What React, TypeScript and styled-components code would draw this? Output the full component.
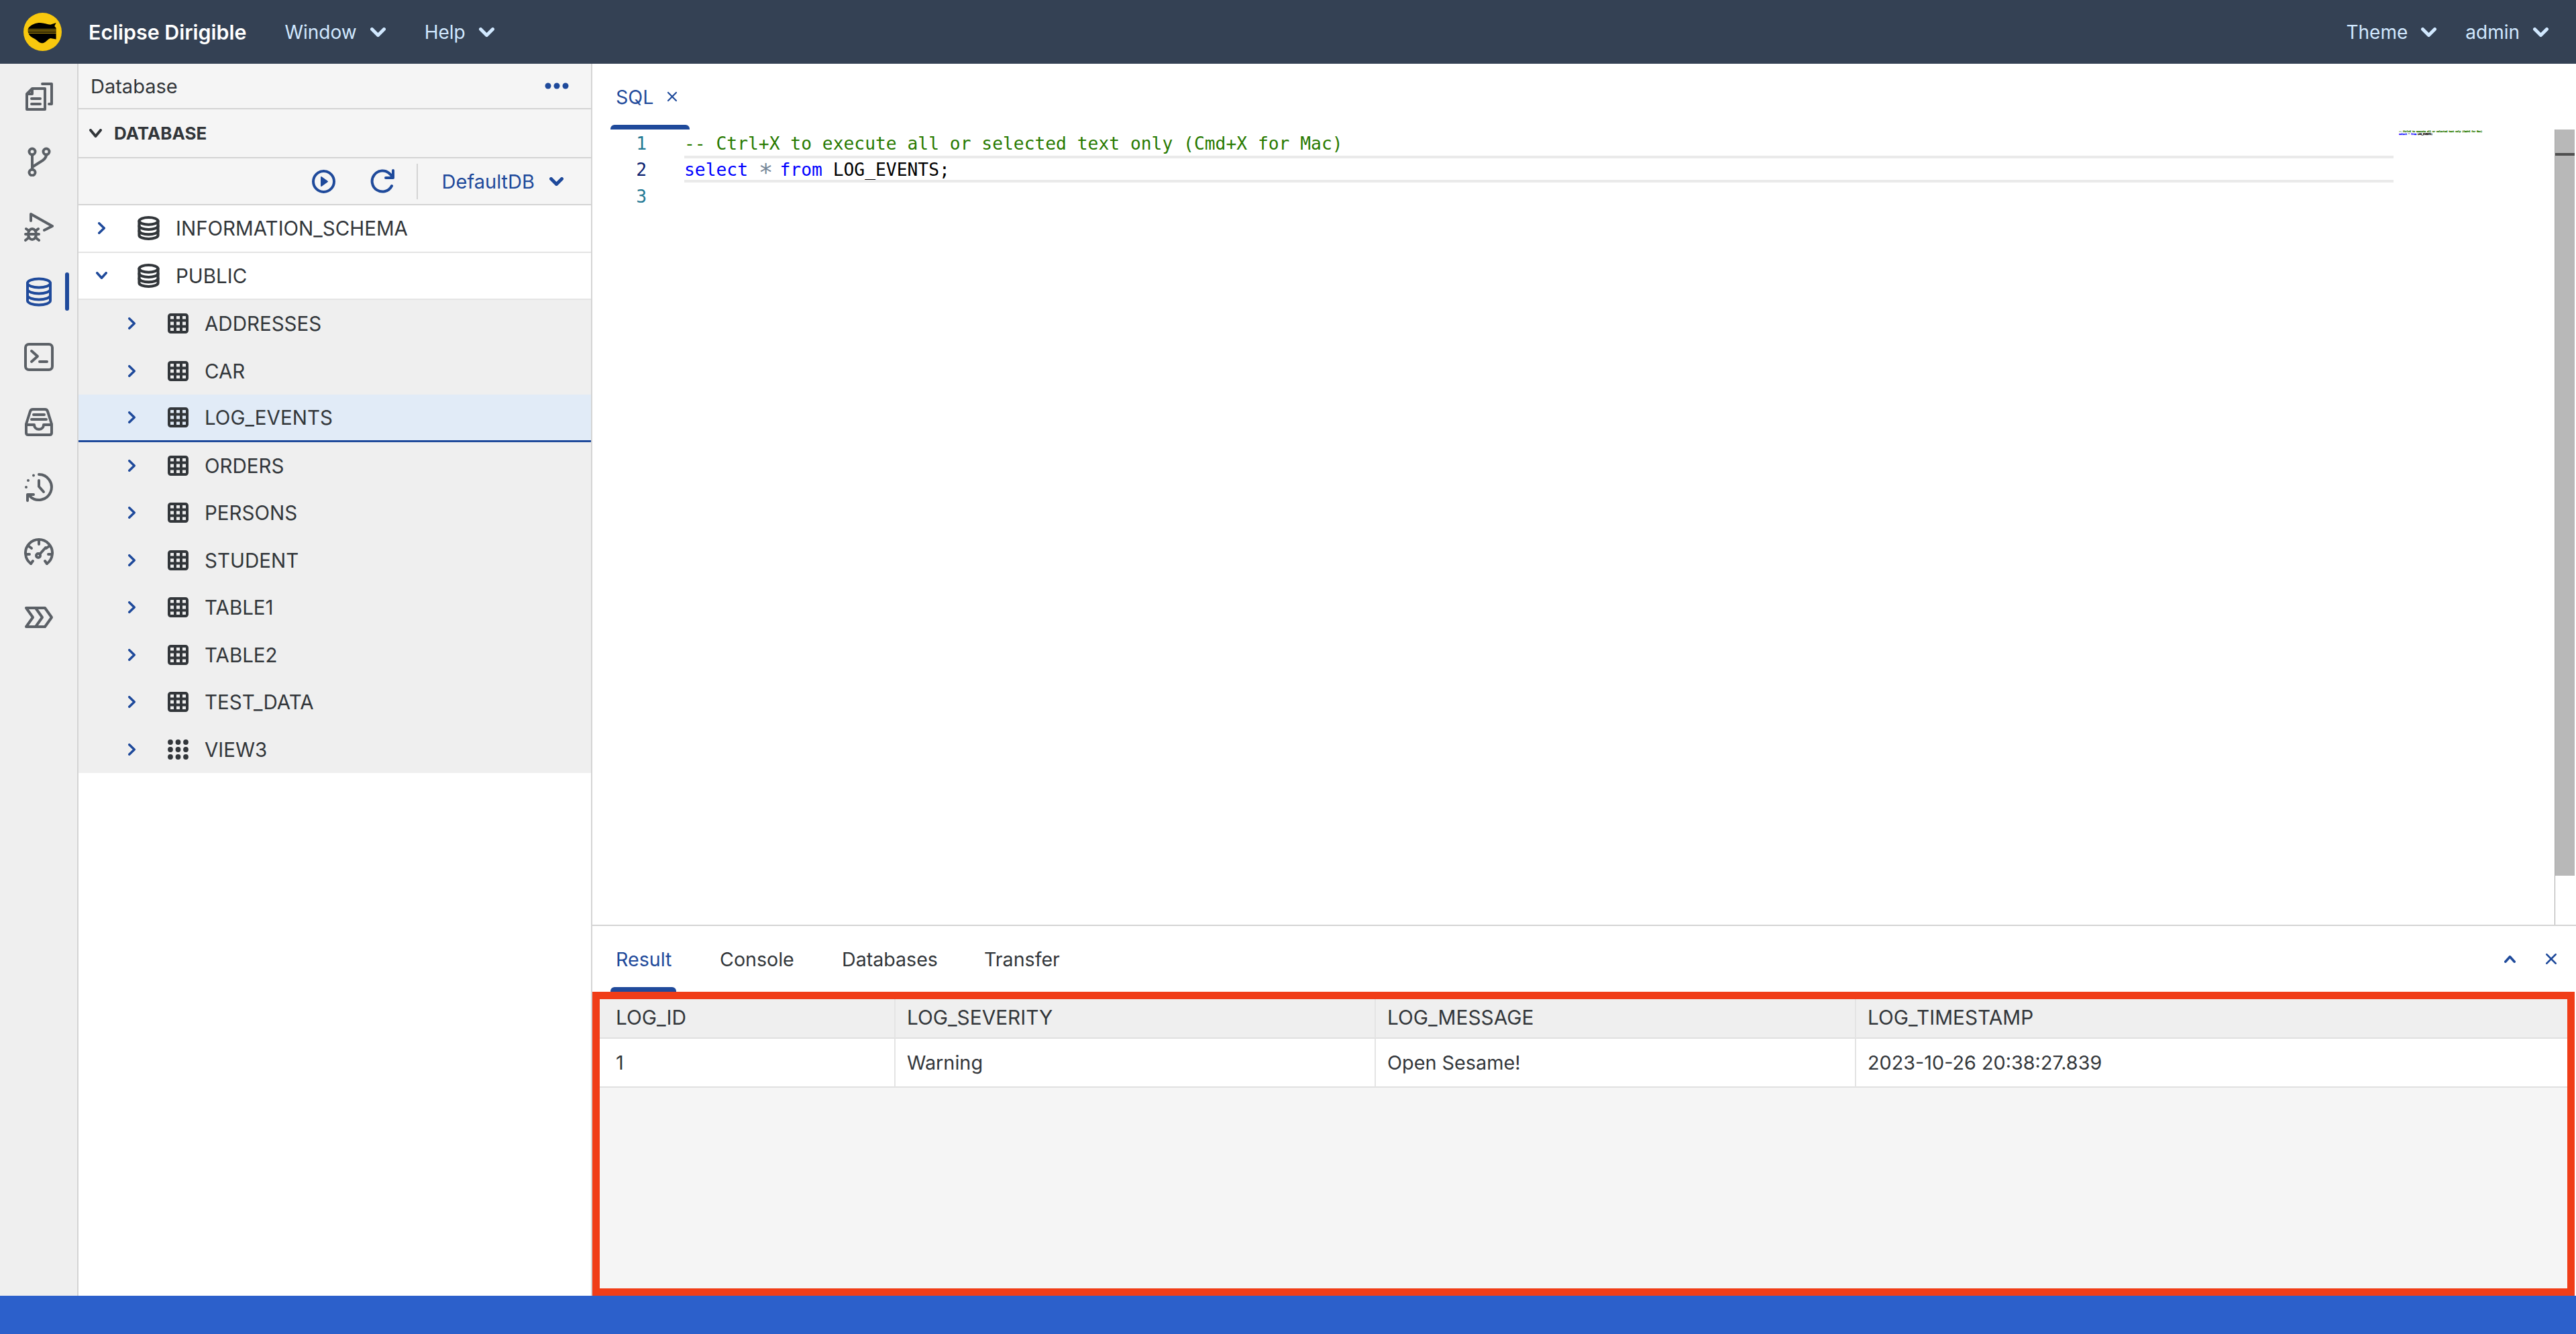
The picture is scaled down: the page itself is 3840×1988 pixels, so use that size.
import React from "react";
import styled, { createGlobalStyle } from "styled-components";

const Global = createGlobalStyle`
  html, body { margin: 0; padding: 0; background: #fff; }
  body { font-family: Inter, "Open Sans", "Liberation Sans", sans-serif; color: #32363a; }
  * { box-sizing: border-box; }
`;

const Page = styled.div`
  width: 3840px; height: 1988px; display: flex; flex-direction: column; overflow: hidden;
`;
const Shell = styled.header`
  height: 95px; flex: none; background: #344154; display: flex; align-items: center; padding: 0 41px 0 35px; color: #d1e8ff;
`;
const Brand = styled.span`
  margin-left: 40px; margin-right: 57px; color: #fff; font-size: 30.4px; font-weight: 600;
`;
const MenuItem = styled.span<{ $after?: number }>`
  display: flex; align-items: center; gap: 20px; font-size: 28px; margin-right: ${(p) => p.$after ?? 58}px;
  &:last-child { margin-right: 0; }
`;
const ShellSpacer = styled.div` flex: 1; `;
const Body = styled.div` flex: 1; display: flex; min-height: 0; `;
const Rail = styled.nav`
  width: 117px; flex: none; background: #efefef; border-right: 2px solid #d4d4d4;
`;
const RailItem = styled.div<{ $active?: boolean }>`
  height: 97px; width: 115px; display: flex; align-items: center; justify-content: center; position: relative;
  color: ${(p) => (p.$active ? "#1f4a9b" : "#5b6066")};
  ${(p) => p.$active && `&::after { content: ""; position: absolute; right: 12px; top: 20px; width: 6px; height: 57px; border-radius: 3px; background: #1f4a9b; }`}
`;
const Side = styled.aside`
  width: 766px; flex: none; border-right: 2px solid #d4d4d4; background: #fff; display: flex; flex-direction: column;
`;
const PanelTitle = styled.div`
  height: 68px; background: #f5f5f5; border-bottom: 2px solid #d4d4d4; display: flex; align-items: center; justify-content: space-between;
  padding: 0 33px 0 18px; font-size: 29px; color: #32363a;
`;
const SectionHead = styled.div`
  height: 73px; background: #f5f5f5; border-bottom: 2px solid #d4d4d4; display: flex; align-items: center; gap: 18px;
  padding-left: 16px; font-size: 26px; font-weight: 700; color: #32363a;
`;
const Toolbar = styled.div`
  height: 70px; background: #f5f5f5; border-bottom: 2px solid #d4d4d4; display: flex; align-items: center; justify-content: flex-end;
  padding-right: 41px; color: #1f4a9b; font-size: 29px;
`;
const ToolButton = styled.span` display: flex; margin-right: 52px; &:nth-child(2) { margin-right: 33px; } `;
const ToolSep = styled.span` width: 2px; height: 53px; background: #d4d4d4; margin-right: 36px; `;
const Select = styled.span` display: flex; align-items: center; gap: 22px; `;
const Tree = styled.div` display: flex; flex-direction: column; `;
const Row = styled.div<{ $child?: boolean; $selected?: boolean }>`
  height: 70.5px; display: flex; align-items: center; font-size: 29.5px; color: #32363a;
  padding-left: ${(p) => (p.$child ? "70px" : "25px")};
  background: ${(p) => (p.$selected ? "#e1ebf7" : p.$child ? "#efefef" : "#fff")};
  border-bottom: ${(p) => (p.$selected ? "3px solid #1f4a9b" : p.$child ? "none" : "2px solid #e4e4e4")};
`;
const Twist = styled.span`
  width: 18px; display: flex; justify-content: center; color: #1f4a9b; margin-right: 45px;
`;
const NodeIcon = styled.span<{ $child?: boolean }>`
  display: flex; width: ${(p) => (p.$child ? "31px" : "33px")}; margin-right: 24px; color: #32363a;
`;
const Main = styled.main` flex: 1; min-width: 0; display: flex; flex-direction: column; `;
const EditorTabs = styled.div` height: 98px; flex: none; display: flex; padding-left: 27px; `;
const TabItem = styled.div<{ $active?: boolean; $w: number; $offset?: number }>`
  position: relative; width: ${(p) => p.$w}px; height: 100%; display: flex; align-items: center; padding-left: 8px; gap: 20px;
  margin-left: ${(p) => p.$offset ?? 0}px;
  font-size: 28.6px; color: ${(p) => (p.$active ? "#1f4a9b" : "#32363a")};
  ${(p) => p.$active && `&::after { content: ""; position: absolute; left: 0; right: 0; bottom: 0; height: 7px; border-radius: 6px 6px 0 0; background: #1f4a9b; }`}
`;
const Editor = styled.section`
  height: 1185px; flex: none; display: flex; font-family: "DejaVu Sans Mono", monospace; font-size: 26.3px; line-height: 42px; white-space: pre;
`;
const Gutter = styled.div` width: 137px; flex: none; padding: 0 56px 0 0; text-align: right; color: #237893; `;
const GutterNum = styled.div<{ $current?: boolean }>` height: 39.3px; color: ${(p) => (p.$current ? "#0b216f" : "#237893")}; `;
const Code = styled.div` flex: 1; min-width: 0; `;
const Line = styled.div<{ $current?: boolean }>`
  height: 39.3px;
  ${(p) => p.$current && "border-top: 4px solid #eaeaea; border-bottom: 4px solid #eaeaea; line-height: 34px;"}
`;
const Comment = styled.span` color: #287a00; `;
const Keyword = styled.span` color: #0000ff; `;
const Star = styled.span`
  display: inline-block; width: 15.84px; text-align: center; color: #778899; font-size: 36px; line-height: 0; position: relative; top: 7px;
`;
const MiniStar = styled.span` color: #778899; `;
const Plain = styled.span` color: #000; `;
const Minimap = styled.div`
  width: 240px; flex: none; padding-left: 8px; font-size: 3.33px; line-height: 4px; padding-top: 1px; font-weight: 700;
  -webkit-text-stroke: 0.3px currentColor;
`;
const Scrollbar = styled.div` width: 30px; flex: none; border-left: 1px solid #a8a8a8; margin-right: 2px; `;
const ScrollThumb = styled.div`
  height: 1112px; background: #b8b8b8; border-top: 35px solid #b8b8b8; position: relative;
  &::after { content: ""; position: absolute; left: 0; right: 0; top: 0; height: 4px; background: #4f4f4f; }
`;
const BottomTabs = styled.div`
  height: 100px; flex: none; border-top: 2px solid #d4d4d4; display: flex; align-items: center; padding: 0 28px 0 27px;
`;
const BottomTabList = styled.div` display: flex; height: 100%; gap: 0; flex: 1; `;
const BottomActions = styled.div` display: flex; align-items: center; gap: 44px; color: #1f4a9b; `;
const ResultFrame = styled.section`
  flex: 1; min-height: 0; border: 11px solid #f03d18; margin-right: 2px; background: #f5f5f5;
`;
const Grid = styled.div` display: grid; grid-template-columns: 441px 716px 716px 1fr; `;
const HeadCell = styled.div<{ $first?: boolean }>`
  height: 59px; background: #efefef; border-bottom: 2px solid #e0e0e0; border-right: 2px solid #e4e4e4;
  padding: 0 0 3px ${(p) => (p.$first ? "24px" : "17px")}; display: flex; align-items: center; font-size: 29.8px;
  &:nth-child(4n) { border-right: none; }
`;
const Cell = styled(HeadCell)` height: 73px; padding-bottom: 0; background: #fff; font-size: 28.8px; `;

const Stroke = styled.svg`
  display: block; fill: none; stroke: currentColor; stroke-linecap: round; stroke-linejoin: round; flex: none;
`;

const Chevron = ({ dir, w, h, sw }: { dir: "down" | "right" | "up"; w: number; h: number; sw: number }) => {
  const d = dir === "down" ? `M${sw / 2} ${sw / 2}L${w / 2} ${h - sw / 2}L${w - sw / 2} ${sw / 2}`
    : dir === "up" ? `M${sw / 2} ${h - sw / 2}L${w / 2} ${sw / 2}L${w - sw / 2} ${h - sw / 2}`
    : `M${sw / 2} ${sw / 2}L${w - sw / 2} ${h / 2}L${sw / 2} ${h - sw / 2}`;
  return <Stroke width={w} height={h} viewBox={`0 0 ${w} ${h}`} strokeWidth={sw}><path d={d} /></Stroke>;
};

const Logo = () => (
  <svg width="57" height="57" viewBox="45 40 170 170" style={{ flex: "none" }}>
    <circle cx="130" cy="125" r="85" fill="#f8c80e" />
    <path d="M65 112C72 98 92 87 112 85C130 82 150 92 165 93L190 85L183 100L190 108V125L190 158L165 153C150 158 145 175 125 175C112 172 105 160 90 153C75 147 67 135 65 125Z" fill="#000" />
    <path d="M65 113H190M65 119H190M65 125H190M65 131H190" stroke="#f8c80e" strokeWidth="2" />
  </svg>
);

const Icon44 = ({ children }: { children: React.ReactNode }) => (
  <Stroke width="44" height="44" viewBox="0 0 44 44" strokeWidth="4">{children}</Stroke>
);

const Db = ({ w, h, sw }: { w: number; h: number; sw: number }) => (
  <Stroke width={w} height={h} viewBox="0 0 40 44" preserveAspectRatio="none" strokeWidth={sw}>
    <path d="M3 9c0-3.5 7.6-6.5 17-6.5S37 5.5 37 9v26c0 3.5-7.6 6.5-17 6.5S3 38.500 3 35z" />
    <path d="M3 9c0 3.500 7.600 6.500 17 6.500S37 12.500 37 9M3 18c0 3.500 7.600 6.500 17 6.500S37 21.500 37 18M3 27c0 3.500 7.600 6.500 17 6.500S37 30.500 37 27" />
  </Stroke>
);

const TableIcon = () => (
  <Stroke width="31" height="30" viewBox="0 0 31 30" strokeWidth="4" strokeLinecap="butt">
    <rect x="2" y="2" width="27" height="26" rx="2.500" />
    <path d="M11 2V28M20 2V28M2 10.500H29M2 19.500H29" />
  </Stroke>
);

const ViewIcon = () => (
  <svg width="31" height="30" viewBox="0 0 31 30" fill="#32363a" style={{ display: "block" }}>
    {[4, 15.5, 27].map((x) => [4, 15, 26].map((y) => <circle key={`${x}-${y}`} cx={x} cy={y} r="3.900" />))}
  </svg>
);

const railIcons: React.ReactNode[] = [
  <Icon44 key="files">
    <path d="M27 3H41V33H37" />
    <path d="M12 10H31V41H4V18Z" />
    <path d="M12 11V18H5" />
    <path d="M11 25H24M11 33H24" />
  </Icon44>,
  <Icon44 key="git">
    <circle cx="12" cy="7" r="4.500" /><circle cx="33" cy="7" r="4.500" /><circle cx="12" cy="38" r="4.500" />
    <path d="M12 11.500V33.500M33 11.500C33 17 28 20 23 23L12 30" />
  </Icon44>,
  <Icon44 key="debug">
    <path d="M10 13V3L42 21L30 27" />
    <ellipse cx="12" cy="33" rx="6" ry="8" strokeWidth="4" />
    <path d="M6 33H18M3 25L7 28M21 25L17 28M2 42L7 38M22 42L17 38M2 33H5M22 33H19" strokeWidth="4" />
  </Icon44>,
  <Db key="db" w={40} h={44} sw={4} />,
  <Icon44 key="term">
    <rect x="2" y="3" width="40" height="38" rx="5" />
    <path d="M11 13L20 21L11 29M23 29H34" />
  </Icon44>,
  <Icon44 key="inbox">
    <path d="M3 25L9 6Q10 3 13 3H31Q34 3 35 6L41 25V38Q41 41 38 41H6Q3 41 3 38Z" />
    <path d="M3 26H15C15 35 29 35 29 26H41M14 11H30M11 18H33" />
  </Icon44>,
  <Icon44 key="hist">
    <path d="M22 3A19 19 0 1 1 9 36" />
    <path d="M5 42V33H14" />
    <path d="M22 12V21L29 29" />
    <path d="M14 4.500V4.600M6 12V12.100M3 22V22.100" />
  </Icon44>,
  <Icon44 key="gauge">
    <path d="M10 39A20 20 0 1 1 34 39" />
    <path d="M22 5V10M7 13L11 16M37 13L33 16M3 25H8M41 25H36M10 39L13 35M34 39L31 35" />
    <circle cx="21" cy="27" r="3" /><path d="M24 24L32 15" />
  </Icon44>,
  <Icon44 key="proc">
    <path d="M3 8H31L41 22L31 36H3L13 22Z" />
    <path d="M17 8L27 22L17 36" />
  </Icon44>,
];

const Play = () => (
  <Stroke width="35" height="35" viewBox="0 0 35 35" strokeWidth="4">
    <circle cx="17.500" cy="17.500" r="15.500" />
    <path d="M14 11L23 17.500L14 24Z" fill="currentColor" strokeWidth="2" />
  </Stroke>
);
const Refresh = () => (
  <Stroke width="36" height="36" viewBox="0 0 36 36" strokeWidth="4">
    <path d="M32 25A15.500 15.500 0 1 1 29 7L34 12" />
    <path d="M34 2V13H23" />
  </Stroke>
);
const Dots = () => (
  <svg width="36" height="10" viewBox="0 0 36 10" fill="#1f4a9b">
    <circle cx="5" cy="5" r="4.500" /><circle cx="18" cy="5" r="4.500" /><circle cx="31" cy="5" r="4.500" />
  </svg>
);
const Close = ({ s }: { s: number }) => (
  <Stroke width={s} height={s} viewBox="0 0 16 16" strokeWidth="2.200"><path d="M2 2L14 14M14 2L2 14" /></Stroke>
);

const children: [string, boolean?][] = [["ADDRESSES"], ["CAR"], ["LOG_EVENTS", true], ["ORDERS"], ["PERSONS"], ["STUDENT"], ["TABLE1"], ["TABLE2"], ["TEST_DATA"]];

const HeadColumns = ["LOG_ID", "LOG_SEVERITY", "LOG_MESSAGE", "LOG_TIMESTAMP"];
const Values = ["1", "Warning", "Open Sesame!", "2023-10-26 20:38:27.839"];
const commentText = "-- Ctrl+X to execute all or selected text only (Cmd+X for Mac)";

export default function App() {
  return (
    <Page>
      <Global />
      <Shell>
        <Logo />
        <Brand>Eclipse Dirigible</Brand>
        <MenuItem>Window <Chevron dir="down" w={23} h={14} sw={5} /></MenuItem>
        <MenuItem>Help <Chevron dir="down" w={23} h={14} sw={5} /></MenuItem>
        <ShellSpacer />
        <MenuItem $after={43}>Theme <Chevron dir="down" w={23} h={14} sw={5} /></MenuItem>
        <MenuItem>admin <Chevron dir="down" w={23} h={14} sw={5} /></MenuItem>
      </Shell>
      <Body>
        <Rail>
          {railIcons.map((icon, i) => <RailItem key={i} $active={i === 3}>{icon}</RailItem>)}
        </Rail>
        <Side>
          <PanelTitle>Database <Dots /></PanelTitle>
          <SectionHead><Chevron dir="down" w={19} h={13} sw={4} />DATABASE</SectionHead>
          <Toolbar>
            <ToolButton><Play /></ToolButton>
            <ToolButton><Refresh /></ToolButton>
            <ToolSep />
            <Select>DefaultDB <Chevron dir="down" w={21} h={13} sw={5} /></Select>
          </Toolbar>
          <Tree>
            <Row><Twist><Chevron dir="right" w={11} h={18} sw={3.500} /></Twist><NodeIcon><Db w={33} h={36} sw={5} /></NodeIcon>INFORMATION_SCHEMA</Row>
            <Row><Twist><Chevron dir="down" w={17} h={11} sw={3.500} /></Twist><NodeIcon><Db w={33} h={36} sw={5} /></NodeIcon>PUBLIC</Row>
            {children.map(([n, sel]) => (
              <Row key={n} $child $selected={sel}><Twist><Chevron dir="right" w={11} h={18} sw={3.500} /></Twist><NodeIcon $child><TableIcon /></NodeIcon>{n}</Row>
            ))}
            <Row $child><Twist><Chevron dir="right" w={11} h={18} sw={3.500} /></Twist><NodeIcon $child><ViewIcon /></NodeIcon>VIEW3</Row>
          </Tree>
        </Side>
        <Main>
          <EditorTabs>
            <TabItem $active $w={118}>SQL <Close s={16} /></TabItem>
          </EditorTabs>
          <Editor>
            <Gutter>
              <GutterNum>1</GutterNum><GutterNum $current>2</GutterNum><GutterNum>3</GutterNum>
            </Gutter>
            <Code>
              <Line><Comment>{commentText}</Comment></Line>
              <Line $current><Keyword>select</Keyword> <Star>*</Star> <Keyword>from</Keyword> <Plain>LOG_EVENTS;</Plain></Line>
              <Line />
            </Code>
            <Minimap>
              <div><Comment>{commentText}</Comment></div>
              <div><Keyword>select</Keyword> <MiniStar>*</MiniStar> <Keyword>from</Keyword> <Plain>LOG_EVENTS;</Plain></div>
            </Minimap>
            <Scrollbar><ScrollThumb /></Scrollbar>
          </Editor>
          <BottomTabs>
            <BottomTabList>
              <TabItem $active $w={98}>Result</TabItem>
              <TabItem $w={182} $offset={57}>Console</TabItem>
              <TabItem $w={212}>Databases</TabItem>
              <TabItem $w={180}>Transfer</TabItem>
            </BottomTabList>
            <BottomActions>
              <Chevron dir="up" w={17} h={11} sw={3.500} />
              <Close s={18} />
            </BottomActions>
          </BottomTabs>
          <ResultFrame>
            <Grid>
              {HeadColumns.map((c, i) => <HeadCell key={c} $first={i === 0}>{c}</HeadCell>)}
              {Values.map((c, i) => <Cell key={c} $first={i === 0}>{c}</Cell>)}
            </Grid>
          </ResultFrame>
        </Main>
      </Body>
      <StatusBar />
    </Page>
  );
}

const StatusBar = styled.footer` height: 57px; flex: none; background: #2c60cb; `;
